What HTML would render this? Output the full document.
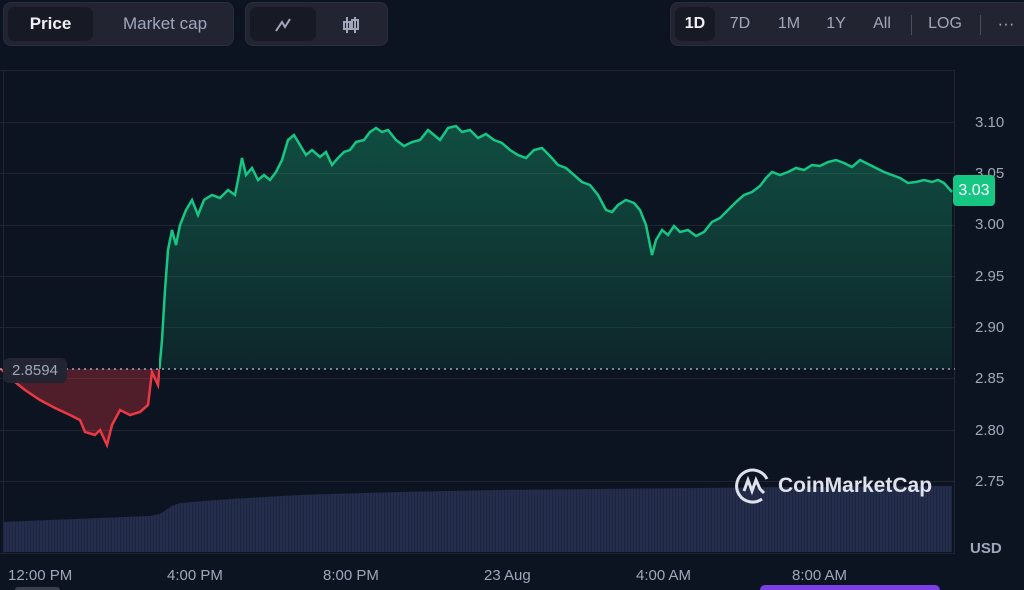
<!DOCTYPE html>
<html style="width:1024px;height:590px;overflow:hidden"><head><meta charset="utf-8"><style>
*{margin:0;padding:0;box-sizing:border-box}
body{width:1024px;height:590px;background:#0d1421;font-family:"Liberation Sans",sans-serif;position:relative;overflow:hidden}
.grp{position:absolute;top:2px;height:44px;background:#222531;border-radius:8px;border:1px solid #2a2e3b}
.btn{position:absolute;top:4px;height:34px;line-height:34px;text-align:center;font-size:17px;color:#a1a7bb}
.on{background:#171924;border-radius:7px;color:#eef0f5;font-weight:bold}
.ax{position:absolute;left:975px;font-size:15px;color:#a1a7bb}
.xl{position:absolute;top:567px;font-size:15px;color:#a1a7bb}
</style></head><body>
<div class="grp" style="left:3px;width:231px">
 <div class="btn on" style="left:4px;width:85px">Price</div>
 <div class="btn" style="left:96px;width:130px">Market cap</div>
</div>
<div class="grp" style="left:245px;width:143px">
 <div class="btn on" style="left:4px;width:66px"><svg width="20" height="16" viewBox="0 0 20 16" style="vertical-align:middle"><path d="M3 14L9 5L12 10L17 2" stroke="#a1a7bb" stroke-width="2" fill="none"/></svg></div>
 <div class="btn" style="left:72px;width:66px"><svg width="20" height="18" viewBox="0 0 20 18" style="vertical-align:middle"><g stroke="#a1a7bb" stroke-width="2" fill="none"><line x1="6" y1="1" x2="6" y2="17"/><rect x="3" y="6" width="6" height="7"/><line x1="14" y1="1" x2="14" y2="17"/><rect x="11" y="4" width="6" height="9"/></g></svg></div>
</div>
<div class="grp" style="left:670px;width:360px">
 <div class="btn on" style="left:4px;width:40px;font-size:16px">1D</div>
 <div class="btn" style="left:52px;width:34px;font-size:16px">7D</div>
 <div class="btn" style="left:100px;width:36px;font-size:16px">1M</div>
 <div class="btn" style="left:148px;width:34px;font-size:16px">1Y</div>
 <div class="btn" style="left:194px;width:34px;font-size:16px">All</div>
 <div style="position:absolute;left:240px;top:12px;width:1px;height:20px;background:#4a4f5e"></div>
 <div class="btn" style="left:252px;width:44px;font-size:16px">LOG</div>
 <div style="position:absolute;left:309px;top:12px;width:1px;height:20px;background:#4a4f5e"></div>
 <div class="btn" style="left:320px;width:30px">···</div>
</div>

<svg style="position:absolute;left:0;top:0" width="1024" height="590">
<defs>
<linearGradient id="g" x1="0" y1="0" x2="0" y2="1"><stop offset="0" stop-color="#16c784" stop-opacity="0.32"/><stop offset="1" stop-color="#16c784" stop-opacity="0.03"/></linearGradient>
<clipPath id="cg"><rect x="159" y="0" width="800" height="369"/></clipPath>
<clipPath id="cr"><rect x="0" y="369" width="160" height="200"/></clipPath>
<pattern id="vs" width="3" height="10" patternUnits="userSpaceOnUse"><rect width="3" height="10" fill="#252d4d"/><rect width="1" height="10" fill="#1f2640"/></pattern>
</defs>
<g stroke="#222531" stroke-width="1">
<line x1="0" y1="70.5" x2="955" y2="70.5"/>
<line x1="0" y1="122.5" x2="955" y2="122.5"/><line x1="0" y1="173.5" x2="955" y2="173.5"/>
<line x1="0" y1="225.5" x2="955" y2="225.5"/><line x1="0" y1="276.5" x2="955" y2="276.5"/>
<line x1="0" y1="327.5" x2="955" y2="327.5"/><line x1="0" y1="378.5" x2="955" y2="378.5"/>
<line x1="0" y1="430.5" x2="955" y2="430.5"/><line x1="0" y1="481.5" x2="955" y2="481.5"/>
<line x1="954.5" y1="70" x2="954.5" y2="553"/><line x1="0" y1="553.5" x2="955" y2="553.5"/>
<line x1="3.5" y1="70" x2="3.5" y2="553"/>
</g>
<path d="M3 522 L50 520 L100 518 L150 516 L160 514 L172 506 L180 503 L230 499 L300 495 L400 492 L500 490 L600 489 L700 488 L800 487 L952 486 L952 552 L3 552Z" fill="url(#vs)"/>
<path id="fillp" d="M0 368 L10 378 L25 390 L40 400 L55 408 L70 415 L80 420 L85 432 L95 435 L100 430 L107 445 L112 425 L120 410 L130 415 L140 412 L148 405 L152 372 L158 385 L162 340 L165 290 L168 250 L172 230 L176 245 L180 225 L186 210 L192 200 L198 215 L204 200 L212 195 L220 198 L228 190 L235 195 L238 180 L242 158 L246 175 L252 168 L258 180 L264 175 L270 180 L276 172 L282 160 L288 140 L294 135 L300 145 L306 155 L312 150 L320 157 L326 152 L332 165 L338 158 L344 152 L350 150 L356 142 L364 140 L370 132 L376 128 L382 132 L388 130 L396 140 L404 146 L412 142 L420 140 L428 130 L434 135 L440 140 L448 128 L456 126 L462 132 L470 130 L478 138 L486 134 L494 140 L502 143 L510 150 L518 155 L526 158 L534 150 L542 148 L550 156 L558 165 L566 168 L574 175 L582 182 L590 185 L598 195 L606 210 L612 212 L618 205 L626 200 L634 203 L640 210 L646 225 L652 255 L656 240 L662 230 L668 235 L674 226 L680 232 L688 230 L696 236 L704 232 L712 222 L720 218 L728 210 L736 202 L744 195 L752 192 L760 186 L766 178 L772 172 L780 175 L788 172 L796 168 L804 170 L812 165 L820 166 L828 162 L836 160 L844 163 L852 167 L860 160 L868 164 L876 168 L884 172 L892 175 L900 178 L908 183 L916 182 L924 180 L932 182 L938 180 L944 183 L952 192" fill="none"/>
<path d="M0 368 L10 378 L25 390 L40 400 L55 408 L70 415 L80 420 L85 432 L95 435 L100 430 L107 445 L112 425 L120 410 L130 415 L140 412 L148 405 L152 372 L158 385 L162 340 L165 290 L168 250 L172 230 L176 245 L180 225 L186 210 L192 200 L198 215 L204 200 L212 195 L220 198 L228 190 L235 195 L238 180 L242 158 L246 175 L252 168 L258 180 L264 175 L270 180 L276 172 L282 160 L288 140 L294 135 L300 145 L306 155 L312 150 L320 157 L326 152 L332 165 L338 158 L344 152 L350 150 L356 142 L364 140 L370 132 L376 128 L382 132 L388 130 L396 140 L404 146 L412 142 L420 140 L428 130 L434 135 L440 140 L448 128 L456 126 L462 132 L470 130 L478 138 L486 134 L494 140 L502 143 L510 150 L518 155 L526 158 L534 150 L542 148 L550 156 L558 165 L566 168 L574 175 L582 182 L590 185 L598 195 L606 210 L612 212 L618 205 L626 200 L634 203 L640 210 L646 225 L652 255 L656 240 L662 230 L668 235 L674 226 L680 232 L688 230 L696 236 L704 232 L712 222 L720 218 L728 210 L736 202 L744 195 L752 192 L760 186 L766 178 L772 172 L780 175 L788 172 L796 168 L804 170 L812 165 L820 166 L828 162 L836 160 L844 163 L852 167 L860 160 L868 164 L876 168 L884 172 L892 175 L900 178 L908 183 L916 182 L924 180 L932 182 L938 180 L944 183 L952 192 L952 369 L0 369Z" fill="url(#g)" clip-path="url(#cg)"/>
<path d="M0 368 L10 378 L25 390 L40 400 L55 408 L70 415 L80 420 L85 432 L95 435 L100 430 L107 445 L112 425 L120 410 L130 415 L140 412 L148 405 L152 372 L158 385 L160 369 L0 369Z" fill="#ea3943" fill-opacity="0.3" clip-path="url(#cr)"/>
<use href="#fillp" stroke="#16c784" stroke-width="2.5" clip-path="url(#cg)"/>
<use href="#fillp" stroke="#ea3943" stroke-width="2.5" clip-path="url(#cr)"/>
<line x1="0" y1="369" x2="955" y2="369" stroke="#a1a7bb" stroke-width="1.5" stroke-dasharray="2 4"/>
<g transform="translate(752,485)" fill="none" stroke="#dfe2ea" stroke-width="3"><path d="M10 14 A16 16 0 1 1 15 -6"/><path d="M-8 6 L-4 -5 L0 6 L4 -5 L8 4 L12 8"/></g>
</svg>
<div style="position:absolute;left:778px;top:474px;font-size:21px;font-weight:bold;color:#dfe2ea">CoinMarketCap</div>
<div style="position:absolute;left:3px;top:358px;width:64px;height:25px;background:#222531;border-radius:6px;color:#a1a7bb;font-size:15px;line-height:25px;text-align:center">2.8594</div>
<div class="ax" style="top:114px">3.10</div>
<div class="ax" style="top:165px">3.05</div>
<div class="ax" style="top:216px">3.00</div>
<div class="ax" style="top:268px">2.95</div>
<div class="ax" style="top:319px">2.90</div>
<div class="ax" style="top:370px">2.85</div>
<div class="ax" style="top:422px">2.80</div>
<div class="ax" style="top:473px">2.75</div>
<div style="position:absolute;left:953px;top:175px;width:42px;height:31px;background:#16c784;border-radius:4px;color:#fff;font-size:16px;line-height:31px;text-align:center">3.03</div>
<div class="ax" style="top:540px;left:970px;font-weight:bold">USD</div>
<div class="xl" style="left:8px">12:00 PM</div>
<div class="xl" style="left:167px">4:00 PM</div>
<div class="xl" style="left:323px">8:00 PM</div>
<div class="xl" style="left:484px">23 Aug</div>
<div class="xl" style="left:636px">4:00 AM</div>
<div class="xl" style="left:792px">8:00 AM</div>
<div style="position:absolute;left:760px;top:585px;width:180px;height:5px;background:#7b3fe4;border-radius:6px 6px 0 0"></div>
<div style="position:absolute;left:15px;top:587px;width:45px;height:3px;background:#3a3f4e;border-radius:6px 6px 0 0"></div>
</body></html>
